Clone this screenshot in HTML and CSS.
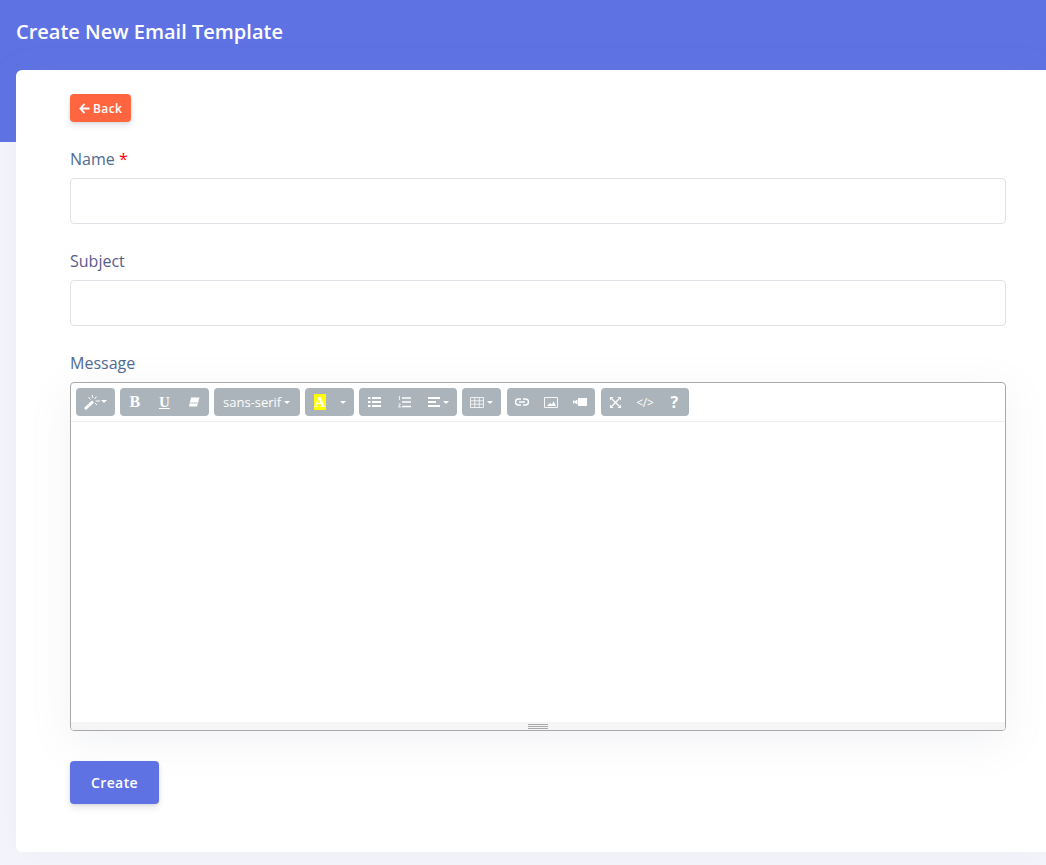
FILE: index.html
```html
<!DOCTYPE html>
<html lang="en">
<head>
<meta charset="utf-8">
<title>Create New Email Template</title>
<link rel="stylesheet" href="styles.css">
</head>
<body>
<header class="banner"><h1 class="title">Create New Email Template</h1></header>
<main class="card">
  <a class="btn-back" href="#"><svg class="back-arrow" viewBox="0 0 12 12"><path d="M6 1 1.500 6 6 11M2 6h9.500" fill="none" stroke="#fff" stroke-width="2"/></svg>Back</a>
  <form class="form">
    <div class="field">
      <label class="label label-name">Name <span class="req">*</span></label>
      <input class="input" type="text">
    </div>
    <div class="field">
      <label class="label label-subject">Subject</label>
      <input class="input" type="text">
    </div>
    <div class="field-editor">
      <label class="label label-name">Message</label>
      <div class="editor">
        <div class="toolbar">
          <div class="group g-style"><span class="tool t-wide">
            <svg class="ic" width="18" height="16" viewBox="0 0 18 16"><path d="M0 14 8 6.500l2 2L2 16z" fill="#fff"/><path d="M8 1l1 3M12.500 2.500l-2 2.500M16 7h-4.500M4.500 3l2 2.500M13 11l-2-2" stroke="#fff" stroke-width="1" fill="none"/></svg><i class="caret caret-tight"></i></span></div>
          <div class="group g-font"><span class="tool t-b">B</span><span class="tool t-u">U</span><span class="tool t-e"><svg class="ic" width="12" height="10" viewBox="0 0 12 10"><path d="M3 .5h8.500L9 9.500H1z" fill="#fff"/><path d="M2.200 6h7.500" stroke="#a9b2b9" stroke-width=".8"/></svg></span></div>
          <div class="group g-name"><span class="tool-text">sans-serif</span><i class="caret"></i></div>
          <div class="group g-color"><span class="swatch">A</span><i class="caret caret-color"></i></div>
          <div class="group g-para">
            <span class="tool t-30"><svg class="ic" width="13" height="10" viewBox="0 0 13 10"><path d="M0 1h2.500M4 1h9M0 5h2.500M4 5h9M0 9h2.500M4 9h9" stroke="#fff" stroke-width="1.800"/></svg></span>
            <span class="tool t-30"><svg class="ic" width="13" height="12" viewBox="0 0 13 12"><path d="M4 2h9M4 6h9M4 10.500h9" stroke="#fff" stroke-width="1.600"/><path d="M.5 1 1.500.5V4M.5 8h2L.5 11h2.500" stroke="#fff" stroke-width=".8" fill="none"/></svg></span>
            <span class="tool t-align"><svg class="ic" width="12" height="10" viewBox="0 0 12 10"><path d="M0 1h12M0 5h8M0 9h12" stroke="#fff" stroke-width="1.800"/></svg><i class="caret"></i></span>
          </div>
          <div class="group g-table"><svg class="ic" width="14" height="11" viewBox="0 0 14 11"><path d="M.5.500h13v10H.5zM.5 3.800h13M.5 7.200h13M4.800.5v10M9.200.5v10" fill="none" stroke="#fff" stroke-width=".8"/></svg><i class="caret"></i></div>
          <div class="group g-insert">
            <span class="tool t-29"><svg class="ic" width="14" height="8" viewBox="0 0 14 8"><path d="M6 1H3.500a3 3 0 0 0 0 6H6M8 1h2.500a3 3 0 0 1 0 6H8M4 4h6" fill="none" stroke="#fff" stroke-width="1.500"/></svg></span>
            <span class="tool t-29"><svg class="ic" width="14" height="11" viewBox="0 0 14 11"><path d="M.5.500h13v10H.5z" fill="none" stroke="#fff" stroke-width=".9"/><path d="M3 9l3-3 2 1.500L9.500 4 12 9z" fill="#fff"/></svg></span>
            <span class="tool t-29"><svg class="ic" width="14" height="8" viewBox="0 0 14 8"><path d="M5 0h9v8H5zM0 2.500h1.500V5.500H0zM2 3l2.500-1.500v5L2 5z" fill="#fff"/></svg></span>
          </div>
          <div class="group g-view">
            <span class="tool t-29"><svg class="ic" width="11" height="11" viewBox="0 0 11 11"><path d="M2 2l7 7M9 2l-7 7" stroke="#fff" stroke-width="1.300"/><path d="M0 0h3.500L0 3.500zM11 0v3.500L7.500 0zM0 11V7.500L3.500 11zM11 11H7.500L11 7.500z" fill="#fff"/></svg></span>
            <span class="tool t-29 t-code">&lt;/&gt;</span>
            <span class="tool t-29 t-help">?</span>
          </div>
        </div>
        <div class="editable"></div>
        <div class="statusbar"><span class="grip"></span></div>
      </div>
    </div>
    <button class="btn-create" type="button">Create</button>
  </form>
</main>
</body>
</html>
```
FILE: styles.css
```css
* { box-sizing: border-box; }
html, body { margin: 0; height: 865px; overflow: hidden; }
body { background: #f4f5fb; font-family: "Open Sans", sans-serif; color: #525f7f; }

.banner { height: 142px; background: #5e72e4; padding: 19px 16px 0; }
.title { margin: 0; font-size: 20px; line-height: 26px; font-weight: 600; color: #fff; }

.card {
  margin: -72px 0 0 16px;
  height: 782px;
  padding: 24px 40px 0 54px;
  background: #fff;
  border-radius: 6px 0 0 6px;
  box-shadow: 0 0 32px rgba(136, 152, 170, .08);
}

.btn-back {
  display: inline-flex;
  align-items: center;
  height: 28px;
  width: 61px;
  padding-left: 9px;
  background: #ff6640;
  border-radius: 4px;
  color: #fff;
  font-size: 12px;
  font-weight: 550;
  letter-spacing: .4px;
  text-decoration: none;
  box-shadow: 0 4px 6px rgba(50, 50, 93, .11), 0 1px 3px rgba(0, 0, 0, .08);
}
.back-arrow { width: 11px; height: 11px; margin-right: 3px; }

.form { margin-top: 25px; }
.field { height: 102px; }
.field-editor { height: 409px; }
.label { display: block; height: 31px; font-size: 16px; line-height: 24px; }
.label-name { color: #4f6a92; }
.label-subject { color: #5a5a8a; }
.req { color: #f00; }
.input {
  display: block;
  width: 100%;
  height: 46px;
  padding: 0 12px;
  background: #fff;
  border: 1px solid #dee2e6;
  border-radius: 4px;
  outline: none;
}

.editor {
  display: flex;
  flex-direction: column;
  height: 349px;
  border: 1px solid #a9a9a9;
  border-radius: 4px;
  box-shadow: 0 10px 40px rgba(136, 152, 170, .12);
}
.toolbar {
  display: flex;
  gap: 5px;
  height: 39px;
  padding: 5px 0 0 5px;
  border-bottom: 1px solid #eee;
}
.group {
  display: flex;
  align-items: center;
  height: 28px;
  background: #abb4bb;
  border-radius: 4px;
  color: #fff;
}
.g-style { width: 39px; }
.g-font { width: 89px; }
.g-name { width: 86px; padding-left: 9px; font-size: 13px; font-weight: 400; }
.g-color { width: 49px; padding-left: 9px; }
.g-para { width: 98px; }
.g-table { width: 39px; padding-left: 8px; }
.g-insert { width: 88px; margin-left: 1px; }
.g-view { width: 88px; margin-left: 1px; }

.tool { display: flex; align-items: center; justify-content: center; height: 28px; }
.t-wide { width: 39px; }
.t-b, .t-u, .t-e { width: 29.600px; font-family: "Liberation Serif", serif; font-weight: 700; }
.t-b { font-size: 16px; }
.t-u { font-size: 15px; text-decoration: underline; }
.t-30 { width: 30px; }
.t-align { width: 38px; }
.t-29 { width: 29.300px; }
.t-code { font-size: 12px; font-weight: 400; letter-spacing: -.2px; }
.t-help { font-size: 16px; font-weight: 700; }
.ic { flex: none; display: block; }
.caret {
  flex: none;
  width: 0;
  height: 0;
  margin-left: 3px;
  border: 3px solid transparent;
  border-top-color: #fff;
  border-bottom: 0;
}
.caret-tight { margin-left: -1px; margin-top: -2px; }
.caret-color { margin-left: 14px; }
.swatch {
  display: block;
  width: 12px;
  height: 16px;
  background: #ff0;
  color: #fff;
  font-family: "Liberation Serif", serif;
  font-size: 15px;
  line-height: 17px;
  font-weight: 700;
  text-align: center;
}

.editable { flex: 1; background: #fff; }
.statusbar { display: flex; justify-content: center; height: 8px; background: #f5f5f5; padding-top: 2px; border-radius: 0 0 3px 3px; }
.grip {
  display: block;
  width: 20px;
  height: 5px;
  border-top: 1px solid #a9a9a9;
  border-bottom: 1px solid #a9a9a9;
  background: linear-gradient(#f5f5f5 1px, #a9a9a9 1px, #a9a9a9 2px, #f5f5f5 2px);
}

.btn-create {
  display: block;
  width: 89px;
  height: 43px;
  margin-top: 1px;
  background: #5e72e4;
  border: 0;
  border-radius: 4px;
  color: #fff;
  font-family: inherit;
  font-size: 14px;
  font-weight: 550;
  letter-spacing: .4px;
  box-shadow: 0 4px 6px rgba(50, 50, 93, .11), 0 1px 3px rgba(0, 0, 0, .08);
}
```
